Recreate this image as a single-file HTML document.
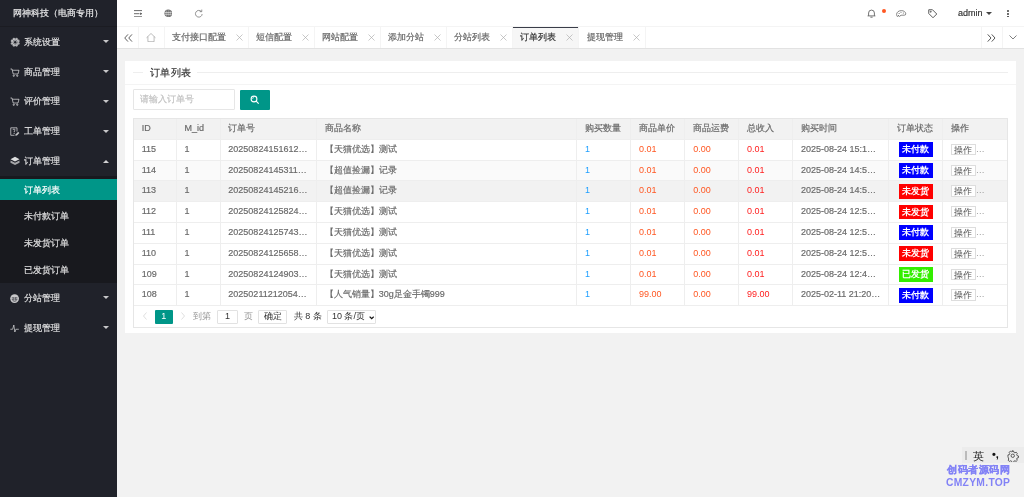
<!DOCTYPE html>
<html><head><meta charset="utf-8">
<style>
*{box-sizing:border-box;margin:0;padding:0}
html,body{width:1024px;height:497px;overflow:hidden;background:#f2f2f2;font-family:"Liberation Sans",sans-serif;color:#6a6a6a;font-size:9px}
i{display:block}
.abs{position:absolute}
#side{position:absolute;left:0;top:0;width:117.33px;height:497px;background:#20222A}
#logo{position:absolute;left:0;top:0;width:117.33px;height:26.67px;line-height:26.67px;border-bottom:1px solid #1b1c22;color:rgba(255,255,255,.88);font-size:8.6px;padding-left:12.5px;white-space:nowrap}
.mi{position:absolute;left:0;width:117.33px;height:29.87px;line-height:29.87px;color:rgba(255,255,255,.8);white-space:nowrap}
.mi .t{position:absolute;left:24px;top:1px}
.mi svg.ic{position:absolute}
.mi .car{position:absolute;left:103.1px;top:13.6px;width:0;height:0;border-left:3px solid transparent;border-right:3px solid transparent;border-top:3.2px solid rgba(255,255,255,.75)}
.mi .car.up{border-top:0;border-bottom:3.2px solid rgba(255,255,255,.8)}
#sub{position:absolute;left:0;top:176px;width:117.33px;height:106.67px;background:#18191e}
.si{position:absolute;left:0;width:117.33px;height:21.33px;line-height:22.8px;padding-left:24px;color:rgba(255,255,255,.8);white-space:nowrap}
.si.on{background:#009688;color:#fff}
#hdr{position:absolute;left:117.33px;top:0;width:906.67px;height:26.67px;background:#fff;border-bottom:1px solid #f4f4f4}
#tabs{position:absolute;left:117.33px;top:26.67px;width:906.67px;height:22px;background:#fff;border-bottom:1px solid #e2e2e2}
.sep{position:absolute;top:0;width:1px;height:21px;background:#f4f4f4}
.tab{position:absolute;top:0;height:21px;line-height:20.6px;color:#666;white-space:nowrap}
#card{position:absolute;left:125.33px;top:61px;width:890.67px;height:271.6px;background:#fff}
#chead{position:absolute;left:0;top:0;width:100%;height:23.8px;border-bottom:1px solid #f4f4f4}
.fl{position:absolute;top:10.5px;height:1px;background:#eee}
#ftitle{position:absolute;left:24.9px;top:4.9px;font-size:10.3px;letter-spacing:0.35px;line-height:14px;color:#333;white-space:nowrap}
#inp{position:absolute;left:8px;top:28.2px;width:101.5px;height:20.8px;border:1px solid #e6e6e6;border-radius:1px;color:#c2c2c2;padding-left:6px;line-height:18.3px;white-space:nowrap}
#btn{position:absolute;left:114.7px;top:28.5px;width:30.3px;height:20.5px;background:#009688;border-radius:1px}
#tbl{position:absolute;left:7.87px;top:57px;width:875.3px;height:209.6px;border:1px solid #e6e6e6}
.row{position:absolute;left:0;width:100%;height:20.8px;border-bottom:1px solid #eee;white-space:nowrap}
.row.h{background:#f2f2f2}
.c{position:absolute;top:0;height:100%;line-height:19.6px;padding-left:8.8px;overflow:hidden}
.vl{position:absolute;top:0;width:1px;height:187.2px;background:#eee}
.blue{color:#1E9FFF}.org{color:#FF5722}.red{color:#FF2020}
.badge{display:inline-block;position:relative;top:0.1px;height:14.8px;line-height:14.8px;padding:0 3.7px;color:#fff;font-weight:bold;font-size:9.4px;vertical-align:middle;margin-left:2px}
.b1{background:#0000ff}.b2{background:#ff0000}.b3{background:#33ee00}
.op{display:inline-block;height:11.2px;line-height:10px;padding:0 2.4px;border:1px solid #ddd;color:#555;vertical-align:middle;font-size:9px;background:#fff}
.dots{color:#999}
#pg{position:absolute;left:0;top:187.2px;width:100%;height:20.4px;white-space:nowrap}
.pbox{top:4.3px;height:13.5px;line-height:11.5px;border:1px solid #e2e2e2;border-radius:1px;background:#fff}
.wm{color:#8282f6;font-weight:bold;font-size:10.3px;line-height:12px;white-space:nowrap}
#side,#hdr,#tabs,#card,.wm{will-change:transform}
#card .c,#tabs .tab,#hdr span,.mi .t,.si,#logo,#inp,#ftitle{-webkit-text-stroke:0.18px currentColor}
#card .c .badge,#card .c .op,#card .c .blue,#card .c .org,#card .c .red,#card .c .dots{-webkit-text-stroke:0}

</style></head><body>
<div id="side">
<div id="logo">网神科技（电商专用）</div>
<div class="mi" style="top:26.67px"><svg class="ic" width="10.4" height="10.4" style="left:9.6px;top:10.2px" viewBox="0 0 20 20"><g fill="rgba(255,255,255,.62)"><circle cx="16.10" cy="12.53" r="2.5"/><circle cx="12.53" cy="16.10" r="2.5"/><circle cx="7.47" cy="16.10" r="2.5"/><circle cx="3.90" cy="12.53" r="2.5"/><circle cx="3.90" cy="7.47" r="2.5"/><circle cx="7.47" cy="3.90" r="2.5"/><circle cx="12.53" cy="3.90" r="2.5"/><circle cx="16.10" cy="7.47" r="2.5"/><circle cx="10" cy="10" r="6"/></g><circle cx="10" cy="10" r="2.3" fill="#20222A"/><g fill="none" stroke="#20222A" stroke-width=".9" opacity=".8"><circle cx="10" cy="10" r="4.6"/></g></svg><span class="t">系统设置</span><i class="car"></i></div>
<div class="mi" style="top:56.54px"><svg class="ic" width="10" height="9" style="left:10px;top:11px" viewBox="0 0 20 18"><g fill="none" stroke="rgba(255,255,255,.72)" stroke-width="1.7"><path d="M1 2h3l2.4 10h9.6l2-7.5H5"/><circle cx="7.5" cy="15.5" r="1.3"/><circle cx="14.5" cy="15.5" r="1.3"/></g></svg><span class="t">商品管理</span><i class="car"></i></div>
<div class="mi" style="top:86.41px"><svg class="ic" width="10" height="9" style="left:10px;top:11px" viewBox="0 0 20 18"><g fill="none" stroke="rgba(255,255,255,.72)" stroke-width="1.7"><path d="M1 2h3l2.4 10h9.6l2-7.5H5"/><circle cx="7.5" cy="15.5" r="1.3"/><circle cx="14.5" cy="15.5" r="1.3"/></g></svg><span class="t">评价管理</span><i class="car"></i></div>
<div class="mi" style="top:116.28px"><svg class="ic" width="10" height="9.6" style="left:9.8px;top:10.4px" viewBox="0 0 20 19"><g fill="none" stroke="rgba(255,255,255,.72)" stroke-width="1.7"><path d="M14 9V1.5H1.5v15H9"/><path d="M6 6a2 2 0 1 1 2.5 1.9V10"/><circle cx="8.2" cy="12.4" r=".5"/></g><path d="M10.5 17.5l1-3.2 4.8-4.8 2.4 2.4-4.8 4.8z" fill="rgba(255,255,255,.72)"/></svg><span class="t">工单管理</span><i class="car"></i></div>
<div class="mi" style="top:146.15px"><svg class="ic" width="10" height="9.6" style="left:10px;top:10.2px" viewBox="0 0 20 19"><path d="M10 1.5L1 6.5l9 4.5 9-4.5z" fill="rgba(255,255,255,.85)"/><path d="M1 9l9 4.5L19 9v4.5L10 18l-9-4.5z" fill="rgba(255,255,255,.6)"/></svg><span class="t">订单管理</span><i class="car up"></i></div>
<div id="sub"><div class="si on" style="top:2.67px">订单列表</div><div class="si" style="top:29.34px">未付款订单</div><div class="si" style="top:56.01px">未发货订单</div><div class="si" style="top:82.68px">已发货订单</div></div>
<div class="mi" style="top:282.67px"><svg class="ic" width="9.2" height="9.2" style="left:10.3px;top:10.9px" viewBox="0 0 18 18"><circle cx="9" cy="9" r="8.6" fill="rgba(255,255,255,.75)"/><g fill="none" stroke="#20222A" stroke-width="1.3"><path d="M3.5 7.5h3M11.5 7.5h3M3.5 10.5h3M11.5 10.5h3M7.5 6v6M10.5 6v6M5 13q4 2.5 8 0"/></g></svg><span class="t">分站管理</span><i class="car"></i></div>
<div class="mi" style="top:312.54px"><svg class="ic" width="9.2" height="9" style="left:10.3px;top:11.2px" viewBox="0 0 18 18"><path d="M0.5 10.5H5L7.5 2l2 14 2-5.5h6" fill="none" stroke="rgba(255,255,255,.72)" stroke-width="1.6"/></svg><span class="t">提现管理</span><i class="car"></i></div>
</div>
<div id="hdr"><svg class="abs" style="left:16.5px;top:9.7px" width="8.6" height="7.4" viewBox="0 0 17.2 14.8"><g stroke="#444" stroke-width="1.6" fill="none"><path d="M0 1.2h17M0 13.6h17M0 7.4h11"/></g><path d="M12.4 4.9l4.4 2.5-4.4 2.5z" fill="#444"/></svg><svg class="abs" style="left:46.6px;top:9.2px" width="8.6" height="8.6" viewBox="0 0 18 18"><circle cx="9" cy="9" r="8" fill="#6a6a6a"/><g fill="none" stroke="#fff" stroke-width="1.5" opacity=".85"><path d="M1.8 7.2h14.4M1.8 11h14.4"/></g><g fill="none" stroke="#fff" stroke-width="1" opacity=".6"><path d="M9 1.5v15M5.5 2.5q-2 6.5 0 13M12.5 2.5q2 6.5 0 13"/></g></svg><svg class="abs" style="left:76.9px;top:8.6px" width="9.6" height="9.6" viewBox="0 0 20 20"><g fill="none" stroke="#555" stroke-width="1.3"><path d="M17 10.5A7 7 0 1 1 15 5"/><path d="M16.2 1.2v4.4h-4.4"/></g></svg><svg class="abs" style="left:749.67px;top:9.3px" width="9" height="8.6" viewBox="0 0 18 17.2"><g fill="none" stroke="#444" stroke-width="1.5"><path d="M3.2 13.6V8a5.8 5.8 0 0 1 11.6 0v5.6M1.2 13.8h15.6M6.8 16.4h4.4"/></g></svg><span class="abs" style="left:765.07px;top:9.2px;width:4px;height:4px;border-radius:50%;background:#FF5722"></span><svg class="abs" style="left:779.47px;top:9.6px" width="10.4" height="7.8" viewBox="0 0 20.8 15.6"><g fill="none" stroke="#555" stroke-width="1.4"><path d="M11 1.2C5.2 1.2 1.2 4.6 1.2 8.8c0 3.6 2.2 5.6 4.2 5.6 1.8 0 2-1.8 3-3 .9-1 2.4-1 3.8-1h4.4c2 0 3-1 3-2.6C19.6 4.4 15.8 1.2 11 1.2z"/></g><g fill="#555"><circle cx="6.2" cy="6.8" r="1"/><circle cx="10" cy="4.4" r="1"/><circle cx="14.6" cy="6" r="1"/><circle cx="4.8" cy="11" r="1.2"/></g></svg><svg class="abs" style="left:810.77px;top:9.2px" width="9.5" height="9" viewBox="0 0 19 18"><g fill="none" stroke="#333" stroke-width="1.6"><path d="M1.5 1.5h7.5l8.5 8.5-7.5 7.5L1.5 9z"/><circle cx="5.5" cy="5.5" r="1"/></g></svg><span class="abs" style="left:840.97px;top:0;line-height:26.67px;color:#333;font-size:9px">admin</span><i class="abs" style="left:868.97px;top:11.5px;width:0;height:0;border-left:3px solid transparent;border-right:3px solid transparent;border-top:3.2px solid #444"></i><i class="abs" style="left:890.47px;top:10.10px;width:1.8px;height:1.8px;background:#444;border-radius:50%"></i><i class="abs" style="left:890.47px;top:12.90px;width:1.8px;height:1.8px;background:#444;border-radius:50%"></i><i class="abs" style="left:890.47px;top:15.70px;width:1.8px;height:1.8px;background:#444;border-radius:50%"></i></div>
<div id="tabs"><i class="sep" style="left:21.17px"></i><i class="sep" style="left:46.57px"></i><i class="sep" style="left:130.97px"></i><i class="sep" style="left:196.97px"></i><i class="sep" style="left:262.97px"></i><i class="sep" style="left:328.97px"></i><i class="sep" style="left:395.27px"></i><i class="sep" style="left:461.37px"></i><i class="sep" style="left:527.67px"></i><i class="sep" style="left:864.17px"></i><i class="sep" style="left:884.87px"></i><svg class="abs" style="left:6.87px;top:6.9px" width="8.8" height="8" viewBox="0 0 17.6 16"><g fill="none" stroke="#444" stroke-width="1.7"><path d="M8 0.8L1.5 8l6.5 7.2M16 0.8L9.5 8l6.5 7.2"/></g></svg><svg class="abs" style="left:28.87px;top:6.2px" width="10" height="9.2" viewBox="0 0 20 18.4"><path d="M1 9.6L10 1l9 8.6M3.8 7.2v10.2h12.4V7.2" fill="none" stroke="#999" stroke-width="1.3"/></svg><div class="abs" style="left:395.57px;top:0;width:65.8px;height:21px;background:#f6f6f6;border-top:1.6px solid #3a3d49"></div><span class="tab" style="left:54.97px;color:#666">支付接口配置</span><svg class="abs" style="left:118.77px;top:6.9px" width="7" height="7" viewBox="0 0 14 14"><path d="M1 1l12 12M13 1L1 13" stroke="#aaa" stroke-width="1.3"/></svg><span class="tab" style="left:139.27px;color:#666">短信配置</span><svg class="abs" style="left:185.07px;top:6.9px" width="7" height="7" viewBox="0 0 14 14"><path d="M1 1l12 12M13 1L1 13" stroke="#aaa" stroke-width="1.3"/></svg><span class="tab" style="left:205.17px;color:#666">网站配置</span><svg class="abs" style="left:251.07px;top:6.9px" width="7" height="7" viewBox="0 0 14 14"><path d="M1 1l12 12M13 1L1 13" stroke="#aaa" stroke-width="1.3"/></svg><span class="tab" style="left:271.47px;color:#666">添加分站</span><svg class="abs" style="left:317.07px;top:6.9px" width="7" height="7" viewBox="0 0 14 14"><path d="M1 1l12 12M13 1L1 13" stroke="#aaa" stroke-width="1.3"/></svg><span class="tab" style="left:337.37px;color:#666">分站列表</span><svg class="abs" style="left:383.07px;top:6.9px" width="7" height="7" viewBox="0 0 14 14"><path d="M1 1l12 12M13 1L1 13" stroke="#aaa" stroke-width="1.3"/></svg><span class="tab" style="left:403.47px;color:#333">订单列表</span><svg class="abs" style="left:449.47px;top:6.9px" width="7" height="7" viewBox="0 0 14 14"><path d="M1 1l12 12M13 1L1 13" stroke="#aaa" stroke-width="1.3"/></svg><span class="tab" style="left:469.77px;color:#666">提现管理</span><svg class="abs" style="left:515.87px;top:6.9px" width="7" height="7" viewBox="0 0 14 14"><path d="M1 1l12 12M13 1L1 13" stroke="#aaa" stroke-width="1.3"/></svg><svg class="abs" style="left:870.47px;top:6.6px" width="8.8" height="8" viewBox="0 0 17.6 16"><g fill="none" stroke="#444" stroke-width="1.8"><path d="M1.5 0.8L8 8l-6.5 7.2M9.5 0.8L16 8l-6.5 7.2"/></g></svg><svg class="abs" style="left:892.17px;top:8.1px" width="8" height="4.5" viewBox="0 0 16 9"><path d="M1 1l7 7 7-7" fill="none" stroke="#555" stroke-width="1.5"/></svg></div>
<div id="card"><div id="chead"><i class="fl" style="left:7.97px;width:10.10px"></i><span id="ftitle">订单列表</span><i class="fl" style="left:71.97px;width:810.70px"></i></div><div id="inp">请输入订单号</div><div id="btn"><svg class="abs" style="left:10.3px;top:5.4px" width="10" height="9.5" viewBox="0 0 20 19"><g fill="none" stroke="#fff" stroke-width="2.2"><circle cx="8" cy="8" r="5.8"/><path d="M12.3 12.3l5 5"/></g><path d="M5 8a3 3 0 0 1 3-3" stroke="#fff" stroke-width="1.2" fill="none"/></svg></div><div id="tbl"><div class="row h" style="top:0"><span class="c" style="left:-1.00px;width:42.90px">ID</span><span class="c" style="left:41.90px;width:43.80px">M_id</span><span class="c" style="left:85.70px;width:96.50px">订单号</span><span class="c" style="left:182.20px;width:260.20px">商品名称</span><span class="c" style="left:442.40px;width:54.00px">购买数量</span><span class="c" style="left:496.40px;width:54.20px">商品单价</span><span class="c" style="left:550.60px;width:53.80px">商品运费</span><span class="c" style="left:604.40px;width:53.90px">总收入</span><span class="c" style="left:658.30px;width:95.70px">购买时间</span><span class="c" style="left:754.00px;width:54.20px">订单状态</span><span class="c" style="left:808.20px;width:65.35px">操作</span></div><div class="row" style="top:20.80px;background:#fff"><span class="c" style="left:-1.00px;width:42.90px">115</span><span class="c" style="left:41.90px;width:43.80px">1</span><span class="c" style="left:85.70px;width:96.50px">20250824151612…</span><span class="c" style="left:182.20px;width:260.20px">【天猫优选】测试</span><span class="c" style="left:442.40px;width:54.00px"><span class="blue">1</span></span><span class="c" style="left:496.40px;width:54.20px"><span class="org">0.01</span></span><span class="c" style="left:550.60px;width:53.80px"><span class="org">0.00</span></span><span class="c" style="left:604.40px;width:53.90px"><span class="red">0.01</span></span><span class="c" style="left:658.30px;width:95.70px">2025-08-24 15:1…</span><span class="c" style="left:754.00px;width:54.20px"><span class="badge b1">未付款</span></span><span class="c" style="left:808.20px;width:65.35px"><span class="op">操作</span><span class="dots">…</span></span></div><div class="row" style="top:41.60px;background:#fafafa"><span class="c" style="left:-1.00px;width:42.90px">114</span><span class="c" style="left:41.90px;width:43.80px">1</span><span class="c" style="left:85.70px;width:96.50px">20250824145311…</span><span class="c" style="left:182.20px;width:260.20px">【超值捡漏】记录</span><span class="c" style="left:442.40px;width:54.00px"><span class="blue">1</span></span><span class="c" style="left:496.40px;width:54.20px"><span class="org">0.01</span></span><span class="c" style="left:550.60px;width:53.80px"><span class="org">0.00</span></span><span class="c" style="left:604.40px;width:53.90px"><span class="red">0.01</span></span><span class="c" style="left:658.30px;width:95.70px">2025-08-24 14:5…</span><span class="c" style="left:754.00px;width:54.20px"><span class="badge b1">未付款</span></span><span class="c" style="left:808.20px;width:65.35px"><span class="op">操作</span><span class="dots">…</span></span></div><div class="row" style="top:62.40px;background:#f2f2f2"><span class="c" style="left:-1.00px;width:42.90px">113</span><span class="c" style="left:41.90px;width:43.80px">1</span><span class="c" style="left:85.70px;width:96.50px">20250824145216…</span><span class="c" style="left:182.20px;width:260.20px">【超值捡漏】记录</span><span class="c" style="left:442.40px;width:54.00px"><span class="blue">1</span></span><span class="c" style="left:496.40px;width:54.20px"><span class="org">0.01</span></span><span class="c" style="left:550.60px;width:53.80px"><span class="org">0.00</span></span><span class="c" style="left:604.40px;width:53.90px"><span class="red">0.01</span></span><span class="c" style="left:658.30px;width:95.70px">2025-08-24 14:5…</span><span class="c" style="left:754.00px;width:54.20px"><span class="badge b2">未发货</span></span><span class="c" style="left:808.20px;width:65.35px"><span class="op">操作</span><span class="dots">…</span></span></div><div class="row" style="top:83.20px;background:#fff"><span class="c" style="left:-1.00px;width:42.90px">112</span><span class="c" style="left:41.90px;width:43.80px">1</span><span class="c" style="left:85.70px;width:96.50px">20250824125824…</span><span class="c" style="left:182.20px;width:260.20px">【天猫优选】测试</span><span class="c" style="left:442.40px;width:54.00px"><span class="blue">1</span></span><span class="c" style="left:496.40px;width:54.20px"><span class="org">0.01</span></span><span class="c" style="left:550.60px;width:53.80px"><span class="org">0.00</span></span><span class="c" style="left:604.40px;width:53.90px"><span class="red">0.01</span></span><span class="c" style="left:658.30px;width:95.70px">2025-08-24 12:5…</span><span class="c" style="left:754.00px;width:54.20px"><span class="badge b2">未发货</span></span><span class="c" style="left:808.20px;width:65.35px"><span class="op">操作</span><span class="dots">…</span></span></div><div class="row" style="top:104.00px;background:#fff"><span class="c" style="left:-1.00px;width:42.90px">111</span><span class="c" style="left:41.90px;width:43.80px">1</span><span class="c" style="left:85.70px;width:96.50px">20250824125743…</span><span class="c" style="left:182.20px;width:260.20px">【天猫优选】测试</span><span class="c" style="left:442.40px;width:54.00px"><span class="blue">1</span></span><span class="c" style="left:496.40px;width:54.20px"><span class="org">0.01</span></span><span class="c" style="left:550.60px;width:53.80px"><span class="org">0.00</span></span><span class="c" style="left:604.40px;width:53.90px"><span class="red">0.01</span></span><span class="c" style="left:658.30px;width:95.70px">2025-08-24 12:5…</span><span class="c" style="left:754.00px;width:54.20px"><span class="badge b1">未付款</span></span><span class="c" style="left:808.20px;width:65.35px"><span class="op">操作</span><span class="dots">…</span></span></div><div class="row" style="top:124.80px;background:#fff"><span class="c" style="left:-1.00px;width:42.90px">110</span><span class="c" style="left:41.90px;width:43.80px">1</span><span class="c" style="left:85.70px;width:96.50px">20250824125658…</span><span class="c" style="left:182.20px;width:260.20px">【天猫优选】测试</span><span class="c" style="left:442.40px;width:54.00px"><span class="blue">1</span></span><span class="c" style="left:496.40px;width:54.20px"><span class="org">0.01</span></span><span class="c" style="left:550.60px;width:53.80px"><span class="org">0.00</span></span><span class="c" style="left:604.40px;width:53.90px"><span class="red">0.01</span></span><span class="c" style="left:658.30px;width:95.70px">2025-08-24 12:5…</span><span class="c" style="left:754.00px;width:54.20px"><span class="badge b2">未发货</span></span><span class="c" style="left:808.20px;width:65.35px"><span class="op">操作</span><span class="dots">…</span></span></div><div class="row" style="top:145.60px;background:#fff"><span class="c" style="left:-1.00px;width:42.90px">109</span><span class="c" style="left:41.90px;width:43.80px">1</span><span class="c" style="left:85.70px;width:96.50px">20250824124903…</span><span class="c" style="left:182.20px;width:260.20px">【天猫优选】测试</span><span class="c" style="left:442.40px;width:54.00px"><span class="blue">1</span></span><span class="c" style="left:496.40px;width:54.20px"><span class="org">0.01</span></span><span class="c" style="left:550.60px;width:53.80px"><span class="org">0.00</span></span><span class="c" style="left:604.40px;width:53.90px"><span class="red">0.01</span></span><span class="c" style="left:658.30px;width:95.70px">2025-08-24 12:4…</span><span class="c" style="left:754.00px;width:54.20px"><span class="badge b3">已发货</span></span><span class="c" style="left:808.20px;width:65.35px"><span class="op">操作</span><span class="dots">…</span></span></div><div class="row" style="top:166.40px;background:#fff"><span class="c" style="left:-1.00px;width:42.90px">108</span><span class="c" style="left:41.90px;width:43.80px">1</span><span class="c" style="left:85.70px;width:96.50px">20250211212054…</span><span class="c" style="left:182.20px;width:260.20px">【人气销量】30g足金手镯999</span><span class="c" style="left:442.40px;width:54.00px"><span class="blue">1</span></span><span class="c" style="left:496.40px;width:54.20px"><span class="org">99.00</span></span><span class="c" style="left:550.60px;width:53.80px"><span class="org">0.00</span></span><span class="c" style="left:604.40px;width:53.90px"><span class="red">99.00</span></span><span class="c" style="left:658.30px;width:95.70px">2025-02-11 21:20…</span><span class="c" style="left:754.00px;width:54.20px"><span class="badge b1">未付款</span></span><span class="c" style="left:808.20px;width:65.35px"><span class="op">操作</span><span class="dots">…</span></span></div><i class="vl" style="left:41.90px"></i><i class="vl" style="left:85.70px"></i><i class="vl" style="left:182.20px"></i><i class="vl" style="left:442.40px"></i><i class="vl" style="left:496.40px"></i><i class="vl" style="left:550.60px"></i><i class="vl" style="left:604.40px"></i><i class="vl" style="left:658.30px"></i><i class="vl" style="left:754.00px"></i><i class="vl" style="left:808.20px"></i><div id="pg"><svg class="abs" style="left:9.40px;top:6.2px" width="4" height="8" viewBox="0 0 8 16"><path d="M7 1L1 8l6 7" fill="none" stroke="#ccc" stroke-width="1.3"/></svg><span class="abs" style="left:21.00px;top:4.3px;width:17.8px;height:13.5px;background:#009688;color:#fff;text-align:center;line-height:13.5px;border-radius:1px">1</span><svg class="abs" style="left:47.30px;top:6.2px" width="4" height="8" viewBox="0 0 8 16"><path d="M1 1l6 7-6 7" fill="none" stroke="#ccc" stroke-width="1.3"/></svg><span class="abs" style="left:59.60px;top:0;line-height:20.8px;color:#999">到第</span><span class="abs pbox" style="left:83.20px;width:21.1px;text-align:center;color:#333">1</span><span class="abs" style="left:109.90px;top:0;line-height:20.8px;color:#999">页</span><span class="abs pbox" style="left:124.10px;width:29.2px;text-align:center;color:#333">确定</span><span class="abs" style="left:159.90px;top:0;line-height:20.8px;color:#333">共 8 条</span><span class="abs pbox" style="left:193.10px;width:49px;padding-left:4px;color:#333">10 条/页<svg class="abs" style="left:40.6px;top:4.6px" width="5.4" height="3.8" viewBox="0 0 10 7"><path d="M1.2 1.2l3.8 3.8 3.8-3.8" fill="none" stroke="#111" stroke-width="2.4"/></svg></span></div></div></div>
<div class="abs" style="left:961.8px;top:447.1px;width:62.2px;height:16.4px;background:#ececec;will-change:transform"></div><i class="abs" style="left:964.7px;top:451px;width:2.2px;height:9px;background:#bbb"></i><span class="abs" style="left:972.5px;top:449.5px;font-size:11px;line-height:12px;color:#222;will-change:transform">英</span><span class="abs" style="left:991.8px;top:448px;font-size:11px;line-height:12px;color:#111;font-weight:bold;will-change:transform">•,</span><svg class="abs" style="left:1007px;top:450px" width="11.5" height="11.5" viewBox="0 0 24 24"><g fill="none" stroke="#333" stroke-width="1.6"><circle cx="12" cy="12" r="3.5"/><path d="M10.3 2h3.4l.6 2.8 2.2 1.1 2.6-1.3 2.4 2.4-1.3 2.6.9 2.2 2.9.7v3.4l-2.9.7-.9 2.2 1.3 2.6-2.4 2.4-2.6-1.3-2.2.9-.6 2.9h-3.4l-.7-2.9-2.2-.9-2.6 1.3-2.4-2.4 1.3-2.6-.9-2.2L2 13.7v-3.4l2.9-.7.9-2.2-1.3-2.6 2.4-2.4 2.6 1.3 2.2-1.1z"/></g></svg><div class="abs wm" style="left:946.5px;top:464.2px;font-size:10.4px;letter-spacing:0.6px;-webkit-text-stroke:0.22px currentColor">创码者源码网</div><div class="abs wm" style="left:945.6px;top:476.7px;letter-spacing:0.3px;font-size:10.3px">CMZYM.TOP</div></body></html>
